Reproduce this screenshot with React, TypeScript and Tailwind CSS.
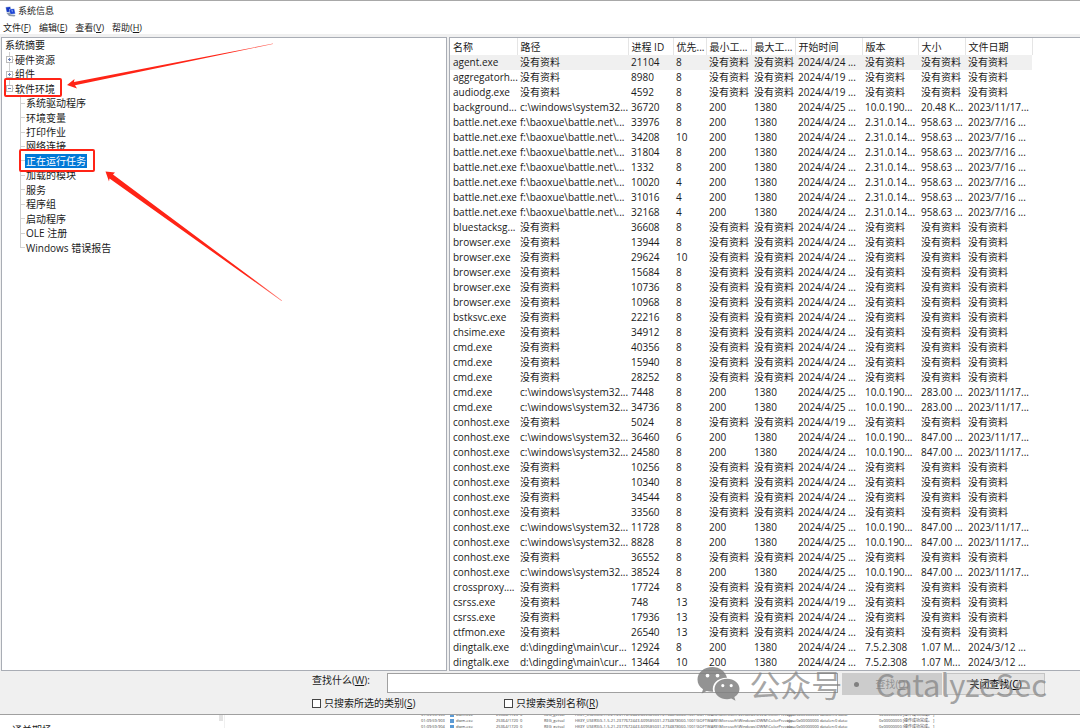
import { useState } from "react";

const NA = "没有资料";

const COLUMNS = [
  { label: "名称", width: "w-[67px]" },
  { label: "路径", width: "w-[111px]" },
  { label: "进程 ID", width: "w-[45px]" },
  { label: "优先...", width: "w-[33px]" },
  { label: "最小工...", width: "w-[45px]" },
  { label: "最大工...", width: "w-[44px]" },
  { label: "开始时间", width: "w-[67px]" },
  { label: "版本", width: "w-[56px]" },
  { label: "大小", width: "w-[47px]" },
  { label: "文件日期", width: "w-[67px]" },
];

type FileInfo = { path: string; version: string; size: string; date: string };

const BATTLE: FileInfo = { path: "f:\\baoxue\\battle.net\\...", version: "2.31.0.14...", size: "958.63 ...", date: "2023/7/16 ..." };
const DING: FileInfo = { path: "d:\\dingding\\main\\cur...", version: "7.5.2.308", size: "1.07 M...", date: "2024/3/12 ..." };
const sys = (size: string): FileInfo => ({
  path: "c:\\windows\\system32...",
  version: "10.0.190...",
  size,
  date: "2023/11/17...",
});

// name, pid, priority, day in April, file details when readable
type Task = [string, number, number, number, FileInfo?];

const TASKS: Task[] = [
  ["agent.exe", 21104, 8, 24],
  ["aggregatorh...", 8980, 8, 19],
  ["audiodg.exe", 4592, 8, 19],
  ["background...", 36720, 8, 25, sys("20.48 K...")],
  ["battle.net.exe", 33976, 8, 24, BATTLE],
  ["battle.net.exe", 34208, 10, 24, BATTLE],
  ["battle.net.exe", 31804, 8, 24, BATTLE],
  ["battle.net.exe", 1332, 8, 24, BATTLE],
  ["battle.net.exe", 10020, 4, 24, BATTLE],
  ["battle.net.exe", 31016, 4, 24, BATTLE],
  ["battle.net.exe", 32168, 4, 24, BATTLE],
  ["bluestacksg...", 36608, 8, 24],
  ["browser.exe", 13944, 8, 24],
  ["browser.exe", 29624, 10, 24],
  ["browser.exe", 15684, 8, 24],
  ["browser.exe", 10736, 8, 24],
  ["browser.exe", 10968, 8, 24],
  ["bstksvc.exe", 22216, 8, 24],
  ["chsime.exe", 34912, 8, 24],
  ["cmd.exe", 40356, 8, 24],
  ["cmd.exe", 15940, 8, 24],
  ["cmd.exe", 28252, 8, 24],
  ["cmd.exe", 7448, 8, 25, sys("283.00 ...")],
  ["cmd.exe", 34736, 8, 25, sys("283.00 ...")],
  ["conhost.exe", 5024, 8, 19],
  ["conhost.exe", 36460, 6, 24, sys("847.00 ...")],
  ["conhost.exe", 24580, 8, 24, sys("847.00 ...")],
  ["conhost.exe", 10256, 8, 24],
  ["conhost.exe", 10340, 8, 24],
  ["conhost.exe", 34544, 8, 24],
  ["conhost.exe", 33560, 8, 24],
  ["conhost.exe", 11728, 8, 25, sys("847.00 ...")],
  ["conhost.exe", 8828, 8, 25, sys("847.00 ...")],
  ["conhost.exe", 36552, 8, 25],
  ["conhost.exe", 38524, 8, 25, sys("847.00 ...")],
  ["crossproxy....", 17724, 8, 24],
  ["csrss.exe", 748, 13, 19],
  ["csrss.exe", 17936, 13, 24],
  ["ctfmon.exe", 26540, 13, 24],
  ["dingtalk.exe", 12924, 8, 24, DING],
  ["dingtalk.exe", 13464, 10, 24, DING],
];

const MENUS = [
  ["文件", "F"],
  ["编辑", "E"],
  ["查看", "V"],
  ["帮助", "H"],
];

const CATEGORIES = [
  { label: "硬件资源", open: false },
  { label: "组件", open: false },
  { label: "软件环境", open: true },
];

const CHILDREN = [
  "系统驱动程序",
  "环境变量",
  "打印作业",
  "网络连接",
  "正在运行任务",
  "加载的模块",
  "服务",
  "程序组",
  "启动程序",
  "OLE 注册",
  "Windows 错误报告",
];

const LOG_ROWS = ["01:09:59:903", "01:09:59:903", "01:09:59:904"];

function AppIcon() {
  return (
    <svg width="11" height="11" viewBox="0 0 22 22" aria-hidden>
      <path d="M1 2l10-1 2 11-10 1z" fill="#9db4dc" />
      <path d="M2 3l8-1 2 9-8 1z" fill="#1738c4" />
      <path d="M8 6l11-1 2 11-11 1z" fill="#b5c6e6" />
      <path d="M9 7l9-1 2 9-9 1z" fill="#1c43d6" />
      <path d="M12 9l4-1-1 5z" fill="#7fa2f5" />
      <path d="M3 14l7-1 1 4 10 1-2 3-11-1z" fill="#8c98ab" />
    </svg>
  );
}

function Connector({ last = false }: { last?: boolean }) {
  return (
    <span className="flex w-[5px] shrink-0 flex-col self-stretch" aria-hidden>
      <span className="flex-1 border-b border-l border-[#d0d0d0]" />
      <span className={last ? "flex-1" : "flex-1 border-l border-[#d0d0d0]"} />
    </span>
  );
}

function Tree({ selected, onSelect }: { selected: string; onSelect: (s: string) => void }) {
  return (
    <ul className="grid h-[217px] auto-rows-fr pl-[3px]">
      <li className="flex items-center">
        <button type="button" className="whitespace-nowrap">系统摘要</button>
      </li>
      {CATEGORIES.map((c) => (
        <li key={c.label} className="relative flex items-center pl-1">
          <Connector last={c.open} />
          <svg className="absolute left-px" width="7" height="7" viewBox="0 0 7 7" aria-hidden>
            <rect x="0.5" y="0.5" width="6" height="6" fill="#fff" stroke="#bcbcbc" />
            <path d={c.open ? "M2 3.5h3" : "M2 3.5h3M3.5 2v3"} stroke="#6b7fb5" />
          </svg>
          <button type="button" className="pl-px whitespace-nowrap">{c.label}</button>
        </li>
      ))}
      {CHILDREN.map((label, i) => (
        <li key={label} className="flex items-center pl-[15px]">
          <Connector last={i === CHILDREN.length - 1} />
          <button
            type="button"
            onClick={() => onSelect(label)}
            className={`h-full px-px leading-[14px] whitespace-nowrap ${
              selected === label ? "bg-[#0078d7] text-white" : ""
            }`}
          >
            {label}
          </button>
        </li>
      ))}
    </ul>
  );
}

function Annotations() {
  return (
    <>
      <div className="absolute top-[40px] left-[2px] h-[19px] w-[58px] rounded-[2px] border-2 border-[#ff2416]" />
      <div className="absolute top-[111px] left-[17px] h-[23px] w-[76px] rounded-[2px] border-2 border-[#ff2416]" />
      <svg className="absolute top-0 left-0" width="290" height="270" viewBox="2 38 290 270" aria-hidden>
        <defs>
          <linearGradient id="fade1" gradientUnits="userSpaceOnUse" x1="67" y1="85" x2="271" y2="44">
            <stop offset="0.8" stopColor="#ff2416" />
            <stop offset="1" stopColor="#ff2416" stopOpacity="0.7" />
          </linearGradient>
          <linearGradient id="fade2" gradientUnits="userSpaceOnUse" x1="106" y1="172" x2="281" y2="301">
            <stop offset="0.8" stopColor="#ff2416" />
            <stop offset="1" stopColor="#ff2416" stopOpacity="0.6" />
          </linearGradient>
        </defs>
        <path d="M67 85L74.5 79L74 82L273 43.600L273 44L75 85.300L77 88.500z" fill="url(#fade1)" />
        <path d="M105.500 171.500L115 172.500L113 174.500L282 300.500L281.500 300.900L109.500 178.500L109 181.500z" fill="url(#fade2)" />
      </svg>
    </>
  );
}

function TaskTable() {
  return (
    <table className="w-[582px] table-fixed border-collapse text-left">
      <thead>
        <tr className="h-[17px]">
          {COLUMNS.map((c) => (
            <th
              key={c.label}
              scope="col"
              className={`${c.width} border-r border-[#e5e5e5] p-0 pl-[3px] font-normal whitespace-nowrap`}
            >
              {c.label}
            </th>
          ))}
        </tr>
      </thead>
      <tbody>
        {TASKS.map(([name, pid, priority, day, file], i) => (
          <tr key={pid} className={i === 0 ? "h-[15px] bg-[#f0f0f0]" : "h-[15px]"}>
            {[
              name,
              file?.path ?? NA,
              pid,
              priority,
              file ? 200 : NA,
              file ? 1380 : NA,
              `2024/4/${day} ...`,
              file?.version ?? NA,
              file?.size ?? NA,
              file?.date ?? NA,
            ].map((cell, j) => (
              <td key={j} className="p-0 pl-[3px] leading-[15px] whitespace-nowrap">
                {cell}
              </td>
            ))}
          </tr>
        ))}
      </tbody>
    </table>
  );
}

function Watermark() {
  return (
    <div className="pointer-events-none absolute -top-[6px] right-[33px] flex h-[38px] items-center font-['Noto_Sans_CJK_SC',sans-serif] text-[31px] leading-[38px] whitespace-nowrap text-[#808080]/70">
      <svg width="43" height="36" viewBox="0 0 43 36" className="mr-[9px]" aria-hidden>
        <path
          fill="#808080"
          fillOpacity="0.85"
          fillRule="evenodd"
          d="M15.500 1C7 1 .5 6.500 .5 13.500c0 4 2 7.400 5.500 9.700L4.700 27.500l5-2.500c2 .5 4 .8 6.500.7-2-7.500 4-14.200 13.800-14C28.500 5.500 22.500 1 15.500 1zM10.500 7.700a1.900 1.900 0 1 1 0 3.800 1.900 1.900 0 0 1 0-3.800zm10 0a1.900 1.900 0 1 1 0 3.800 1.900 1.900 0 0 1 0-3.800z"
        />
        <path
          fill="#808080"
          fillOpacity="0.85"
          fillRule="evenodd"
          d="M30 12.700c-7 0-12.500 4.600-12.500 10.300S23 33.300 30 33.300c1.500 0 3-.3 4.300-.7l4.200 2.200-1.200-3.700c3.200-2 5.200-4.700 5.200-8.100 0-5.700-5.500-10.300-12.500-10.300zM25.800 18a1.600 1.600 0 1 1 0 3.200 1.600 1.600 0 0 1 0-3.200zm8.400 0a1.600 1.600 0 1 1 0 3.200 1.600 1.600 0 0 1 0-3.200z"
        />
      </svg>
      <span>公众号</span>
      <span className="mr-[16px] ml-[12px] size-[5px] rounded-full bg-[#808080]" />
      <span>CatalyzeSec</span>
    </div>
  );
}

function SearchBar() {
  return (
    <form className="relative shrink-0 border-b border-[#a0a0a0] pt-[2px] pr-[35px] pb-1 pl-[312px]">
      <div className="flex items-start gap-1">
        <label htmlFor="find" className="w-[71px] shrink-0 leading-[15px] whitespace-nowrap">
          查找什么(<u>W</u>):
        </label>
        <input id="find" type="text" className="h-5 min-w-0 flex-1 border border-[#a0a0a0] bg-white px-1 outline-none" />
        <button type="button" disabled className="h-[22px] w-[100px] shrink-0 bg-[#cccccc] text-[#929292]">
          查找(<u>D</u>)
        </button>
        <button type="button" className="h-[22px] w-[99px] shrink-0 border border-[#c4c4c4] bg-[#e4e4e4] text-black">
          关闭查找(<u>C</u>)
        </button>
      </div>
      <div className="flex pt-[2px] leading-[13px] whitespace-nowrap">
        <label className="flex w-[192px] items-center gap-[3px]">
          <input type="checkbox" className="size-[9px] appearance-none border border-[#444] bg-white checked:bg-[#0078d7]" />
          <span>只搜索所选的类别(<u>S</u>)</span>
        </label>
        <label className="flex items-center gap-[3px]">
          <input type="checkbox" className="size-[9px] appearance-none border border-[#444] bg-white checked:bg-[#0078d7]" />
          <span>只搜索类别名称(<u>R</u>)</span>
        </label>
      </div>
      <Watermark />
    </form>
  );
}

// sliver of the window that sits behind
function BackgroundWindow() {
  return (
    <div className="flex min-h-0 flex-1 overflow-hidden bg-white">
      <div className="flex w-[225px] shrink-0 justify-between border-r border-[#f0f0f0] pr-px pl-3">
        <span className="pt-[9px] leading-[12px]">通关期场</span>
        <span className="h-[6px] w-1 bg-[#e3e3e3]" />
      </div>
      <div className="-mt-[3px] pl-[196px] text-[4px] text-[#444]">
        {LOG_ROWS.map((time, i) => (
          <div key={i} className="flex h-[6px] items-center leading-[6px] whitespace-nowrap">
            <span className="w-[29px]">{time}</span>
            <span className="mr-[2px] size-1 bg-[#5b9bd5]" />
            <span className="w-10">dwm.exe</span>
            <span className="w-6">25364/1720</span>
            <span className="w-6">0</span>
            <span className="w-[31px]">REG_getval</span>
            <span className="w-[212px]">
              HKEY_USERS\S-1-5-21-2377672443-609585031-2734878060-1001\SOFTWARE\Microsoft\Windows\DWM\ColorPrevale...
            </span>
            <span className="w-[92px]">type:0x00000000 datalen:0 data:</span>
            <span>0x00000000 [操作成功完成。 ]</span>
          </div>
        ))}
      </div>
    </div>
  );
}

export default function App() {
  const [selected, setSelected] = useState("正在运行任务");

  return (
    <div className="flex h-screen flex-col overflow-hidden border-t border-[#a8a8a8] bg-[#f0f0f0] font-['Open_Sans','Noto_Sans_CJK_SC',sans-serif] text-[10px] leading-[14px] text-[#1a1a1a]">
      <header className="shrink-0 bg-white text-[9px]">
        <div className="flex h-5 items-center gap-[2px] pl-[5px]">
          <AppIcon />
          <h1>系统信息</h1>
        </div>
        <nav className="flex h-[13px] items-center gap-2 pl-[3px]">
          {MENUS.map(([label, key]) => (
            <button key={key} type="button" className="whitespace-nowrap">
              {label}(<u>{key}</u>)
            </button>
          ))}
        </nav>
      </header>

      <main className="flex shrink-0 gap-[2px] pt-[3px] pl-px">
        <section className="relative w-[446px] shrink-0 border border-[#a9adb5] bg-white">
          <Tree selected={selected} onSelect={setSelected} />
          <Annotations />
        </section>
        <section className="min-w-0 flex-1 overflow-hidden border-y border-l border-[#a9adb5] bg-white">
          <TaskTable />
        </section>
      </main>

      <SearchBar />
      <BackgroundWindow />
    </div>
  );
}
